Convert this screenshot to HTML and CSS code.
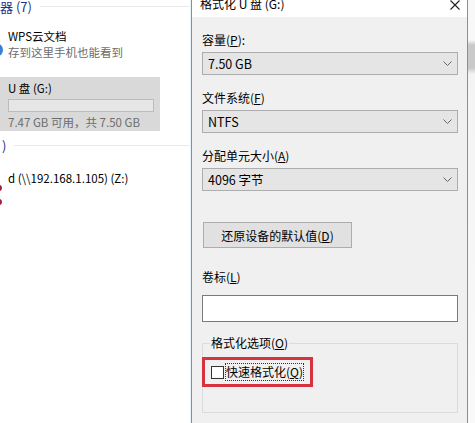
FILE: index.html
```html
<!DOCTYPE html>
<html lang="zh-CN">
<head>
    <meta charset="UTF-8">
    <title>格式化 U 盘 (G:)</title>
    <link rel="stylesheet" href="styles.css">
</head>
<body>
    <div class="screen">
        <!-- explorer pane behind the dialog -->
        <div class="explorer">
            <div class="group-head top"><span>器 (7)</span><span class="rule"></span></div>
            <div class="item wps">
                <span class="dot blue"></span>
                <div class="name">WPS云文档</div>
                <div class="sub">存到这里手机也能看到</div>
            </div>
            <div class="item drive selected">
                <div class="name">U 盘 (G:)</div>
                <div class="bar"></div>
                <div class="sub">7.47 GB 可用，共 7.50 GB</div>
            </div>
            <div class="group-head"><span>)</span><span class="rule"></span></div>
            <div class="item net">
                <span class="dot red one"></span>
                <span class="dot red two"></span>
                <div class="name">d (\\192.168.1.105) (Z:)</div>
            </div>
        </div>

        <!-- format dialog -->
        <div class="dialog">
            <div class="titlebar">
                <span class="title">格式化 U 盘 (G:)</span>
                <svg class="close" width="10" height="10" viewBox="0 0 10 10"><path d="M0.5 0.5 L9.5 9.5 M9.5 0.5 L0.5 9.5" stroke="#222" stroke-width="1.1" fill="none"/></svg>
            </div>
            <div class="dialog-body">
                <div class="label">容量(<u>P</u>):</div>
                <div class="combo"><span>7.50 GB</span><svg width="9" height="5" viewBox="0 0 9 5"><polyline points="0.5,0.5 4.5,4.5 8.5,0.5" stroke="#666" fill="none"/></svg></div>

                <div class="label">文件系统(<u>F</u>)</div>
                <div class="combo"><span>NTFS</span><svg width="9" height="5" viewBox="0 0 9 5"><polyline points="0.5,0.5 4.5,4.5 8.5,0.5" stroke="#666" fill="none"/></svg></div>

                <div class="label">分配单元大小(<u>A</u>)</div>
                <div class="combo"><span>4096 字节</span><svg width="9" height="5" viewBox="0 0 9 5"><polyline points="0.5,0.5 4.5,4.5 8.5,0.5" stroke="#666" fill="none"/></svg></div>

                <button class="restore">还原设备的默认值(<u>D</u>)</button>

                <div class="label volume">卷标(<u>L</u>)</div>
                <div class="textbox"></div>

                <fieldset class="options">
                    <legend>格式化选项(<u>O</u>)</legend>
                    <div class="highlight">
                        <span class="check"></span>
                        <span class="focus">快速格式化(<u>Q</u>)</span>
                    </div>
                </fieldset>
            </div>
        </div>

        <div class="backdrop"></div>
    </div>
</body>
</html>
```

FILE: styles.css
```css
body {
    margin: 0;
    font-family: "Noto Sans CJK SC", "Noto Sans", sans-serif;
    font-size: 12px;
    color: #000;
    background: #fff;
}
.screen {
    display: flex;
    width: 475px;
    height: 423px;
    overflow: hidden;
}

/* explorer pane */
.explorer {
    width: 191px;
    flex-shrink: 0;
    background: #fff;
    font-size: 11.5px;
    border-right: 1px solid #eaf3f8;
    box-sizing: border-box;
}
.group-head {
    display: flex;
    align-items: center;
    height: 16px;
    padding-left: 2px;
    color: #1e3287;
    font-size: 13px;
}
.group-head.top {
    margin-top: -2px;
    padding-left: 0;
}
.group-head .rule {
    flex: 1;
    height: 1px;
    background: #e6ecf0;
    margin-left: 8px;
}
.item {
    position: relative;
    padding-left: 8px;
}
.item .name {
    line-height: 16px;
}
.item .sub {
    color: #6d6d6d;
    line-height: 16px;
}
.wps {
    margin-top: 14px;
}
.dot {
    position: absolute;
    left: -4px;
    width: 7px;
    height: 7px;
    border-radius: 50%;
}
.dot.blue {
    top: 16px;
    width: 10px;
    height: 12px;
    left: -7px;
    background: #3a7fd4;
}
.dot.red {
    background: #a0203a;
    width: 6px;
    height: 6px;
}
.dot.red.one {
    top: 15px;
}
.dot.red.two {
    top: 29px;
}
.drive {
    width: 160px;
    box-sizing: border-box;
    margin-top: 17px;
    padding-top: 3px;
    padding-bottom: 3px;
    height: 54px;
    background: #d9d9d9;
}
.drive .bar {
    width: 144px;
    height: 11px;
    margin: 3px 0 2px;
    background: #e6e6e6;
    border: 1px solid #bcbcbc;
}
.drive + .group-head {
    margin-top: 6px;
}
.net {
    margin-top: 17px;
}

/* dialog */
.dialog {
    width: 277px;
    flex-shrink: 0;
    background: #f0f0f0;
    border-left: 1px solid #5aa0bd;
    border-right: 1px solid #5aa0bd;
    box-sizing: border-box;
}
.titlebar {
    display: flex;
    justify-content: space-between;
    align-items: center;
    height: 17px;
    background: #fff;
    padding: 0 7px 0 8px;
    overflow: hidden;
}
.title {
    margin-top: -10px;
    font-size: 12px;
}
.close {
    margin-top: -8px;
}
.dialog-body {
    padding: 0 9px 0 10px;
}
.label {
    height: 16px;
    line-height: 16px;
    margin-top: 15px;
}
.combo {
    display: flex;
    justify-content: space-between;
    align-items: center;
    height: 23px;
    margin-top: 4px;
    padding: 0 5px 0 5px;
    background: #e5e5e5;
    border: 1px solid #adadad;
    box-sizing: border-box;
}
.combo span {
    font-size: 12.5px;
}
.restore {
    display: block;
    margin-top: 31px;
    width: 149px;
    height: 26px;
    margin-left: 1px;
    padding: 0;
    background: #e1e1e1;
    border: 1px solid #adadad;
    font-family: inherit;
    font-size: 12px;
    color: #000;
}
.label.volume {
    margin-top: 21px;
}
.textbox {
    height: 27px;
    margin-top: 10px;
    background: #fff;
    border: 1px solid #7a7a7a;
    box-sizing: border-box;
}
.options {
    margin: 13px 0 0;
    padding: 0;
    height: 78px;
    border: 1px solid #dcdcdc;
    box-sizing: border-box;
}
.options legend {
    margin-left: 7px;
    padding: 0 1px;
    line-height: 16px;
}
.highlight {
    display: flex;
    align-items: center;
    width: 111px;
    height: 30px;
    margin: 6px 0 0 -1px;
    padding-left: 6px;
    border: 3px solid #d5343f;
    box-sizing: border-box;
}
.check {
    width: 13px;
    height: 13px;
    border: 1px solid #333;
    background: #fff;
    box-sizing: border-box;
}
.focus {
    margin-left: 1px;
    padding: 0 1px;
    line-height: 18px;
    outline: 1px dotted #333;
    outline-offset: -1px;
}

/* sliver of the window behind */
.backdrop {
    flex: 1;
    background: linear-gradient(to bottom, #f8f8f8 0, #f8f8f8 40px, #c9c9c9 45px, #c9c9c9 68px, #f4f4f4 74px, #f9f9f9 100%);
}
```
